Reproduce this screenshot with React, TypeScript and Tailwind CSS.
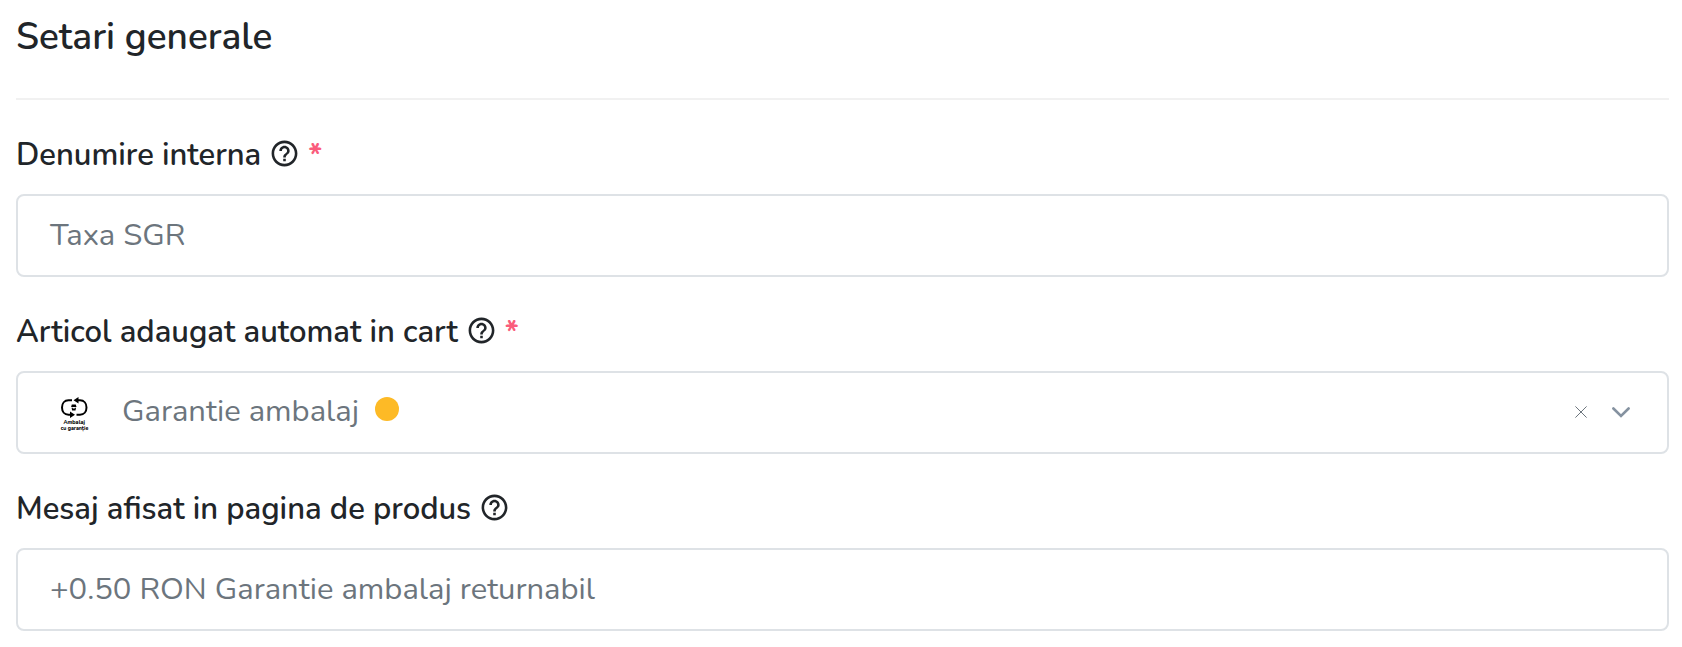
import { ReactNode } from 'react';
import { MdHelpOutline } from 'react-icons/md';

interface FieldProps {
  label: string;
  required?: boolean;
  children: ReactNode;
}

function Field({ label, required, children }: FieldProps) {
  return (
    <div className="h-[177px]">
      <div className="flex h-[47px] items-start text-[#212529]">
        <span className="whitespace-nowrap text-[31px] font-semibold leading-[46px]">{label}</span>
        <MdHelpOutline className="ml-2 mt-[5.5px] size-[31px] shrink-0" />
        {required && <span className="ml-2 mt-px text-[31px] font-bold leading-[46px] text-[#fa5c7c]">*</span>}
      </div>
      <div className="mt-[15px] flex h-[83px] items-center rounded-lg border-2 border-[#dee2e6] bg-white pl-8 pr-[37px] text-[31px] leading-[46px] text-[#6c757d]">
        {children}
      </div>
    </div>
  );
}

function PackagingLogo() {
  return (
    <svg width="48" height="48" viewBox="0 0 48 48" className="shrink-0">
      <g fill="none" stroke="#000" strokeWidth="2">
        <path d="M22 11.300h-3.500c-4 0-6.500 3-6.500 7.200s2.500 7.200 6.500 7.200h2" />
        <path d="M27 11.300h3c4 0 6.500 3 6.500 7.200s-2.500 7.200-6.500 7.200h-3.500" />
      </g>
      <path d="M23.500 11.300l5-3.300v6.600zM25 25.700l-5-3.300v6.600z" />
      <path d="M21.800 15.500h4l.7 2.500h-5.400zM21.600 18.800h1.200v.8h2v-.8h1.200l-.5 2.700h-3.400z" />
      <text x="24.200" y="34.700" fontSize="5.400" fontWeight="800" textAnchor="middle">
        Ambalaj
      </text>
      <text x="24.500" y="40.500" fontSize="5.200" fontWeight="800" textAnchor="middle">
        cu garanție
      </text>
    </svg>
  );
}

export default function App() {
  return (
    <div className="h-[647px] bg-white pl-4 pr-[13px] font-['Nunito','Lato',sans-serif]">
      <div className="flex h-[100px] items-start border-b-2 border-[#f1f1f1] pt-[11px]">
        <h4 className="text-[37px] font-semibold leading-[52px] text-[#212529]">Setari generale</h4>
      </div>

      <div className="pt-8">
        <Field label="Denumire interna" required>
          <span className="-mt-[2px]">Taxa SGR</span>
        </Field>

        <Field label="Articol adaugat automat in cart" required>
          <PackagingLogo />
          <span className="-mt-1 ml-6">Garantie ambalaj</span>
          <span className="-mt-[7px] ml-4 size-6 rounded-full bg-[#fdba26]" />
          <div className="-mt-px ml-auto flex items-center gap-[25px]">
            <svg width="12" height="12" viewBox="0 0 12 12" fill="none" stroke="#6c757d" strokeWidth="1">
              <path d="M.4.400l11.200 11.200M11.600.400L.4 11.600" />
            </svg>
            <svg width="18" height="11" viewBox="0 0 18 11" fill="none" stroke="#8592a0" strokeWidth="2.600" strokeLinecap="round">
              <path d="M1.400 1.500L9 8.900l7.600-7.400" />
            </svg>
          </div>
        </Field>

        <Field label="Mesaj afisat in pagina de produs">
          <span className="-mt-[2px]">+0.50 RON Garantie ambalaj returnabil</span>
        </Field>
      </div>
    </div>
  );
}
